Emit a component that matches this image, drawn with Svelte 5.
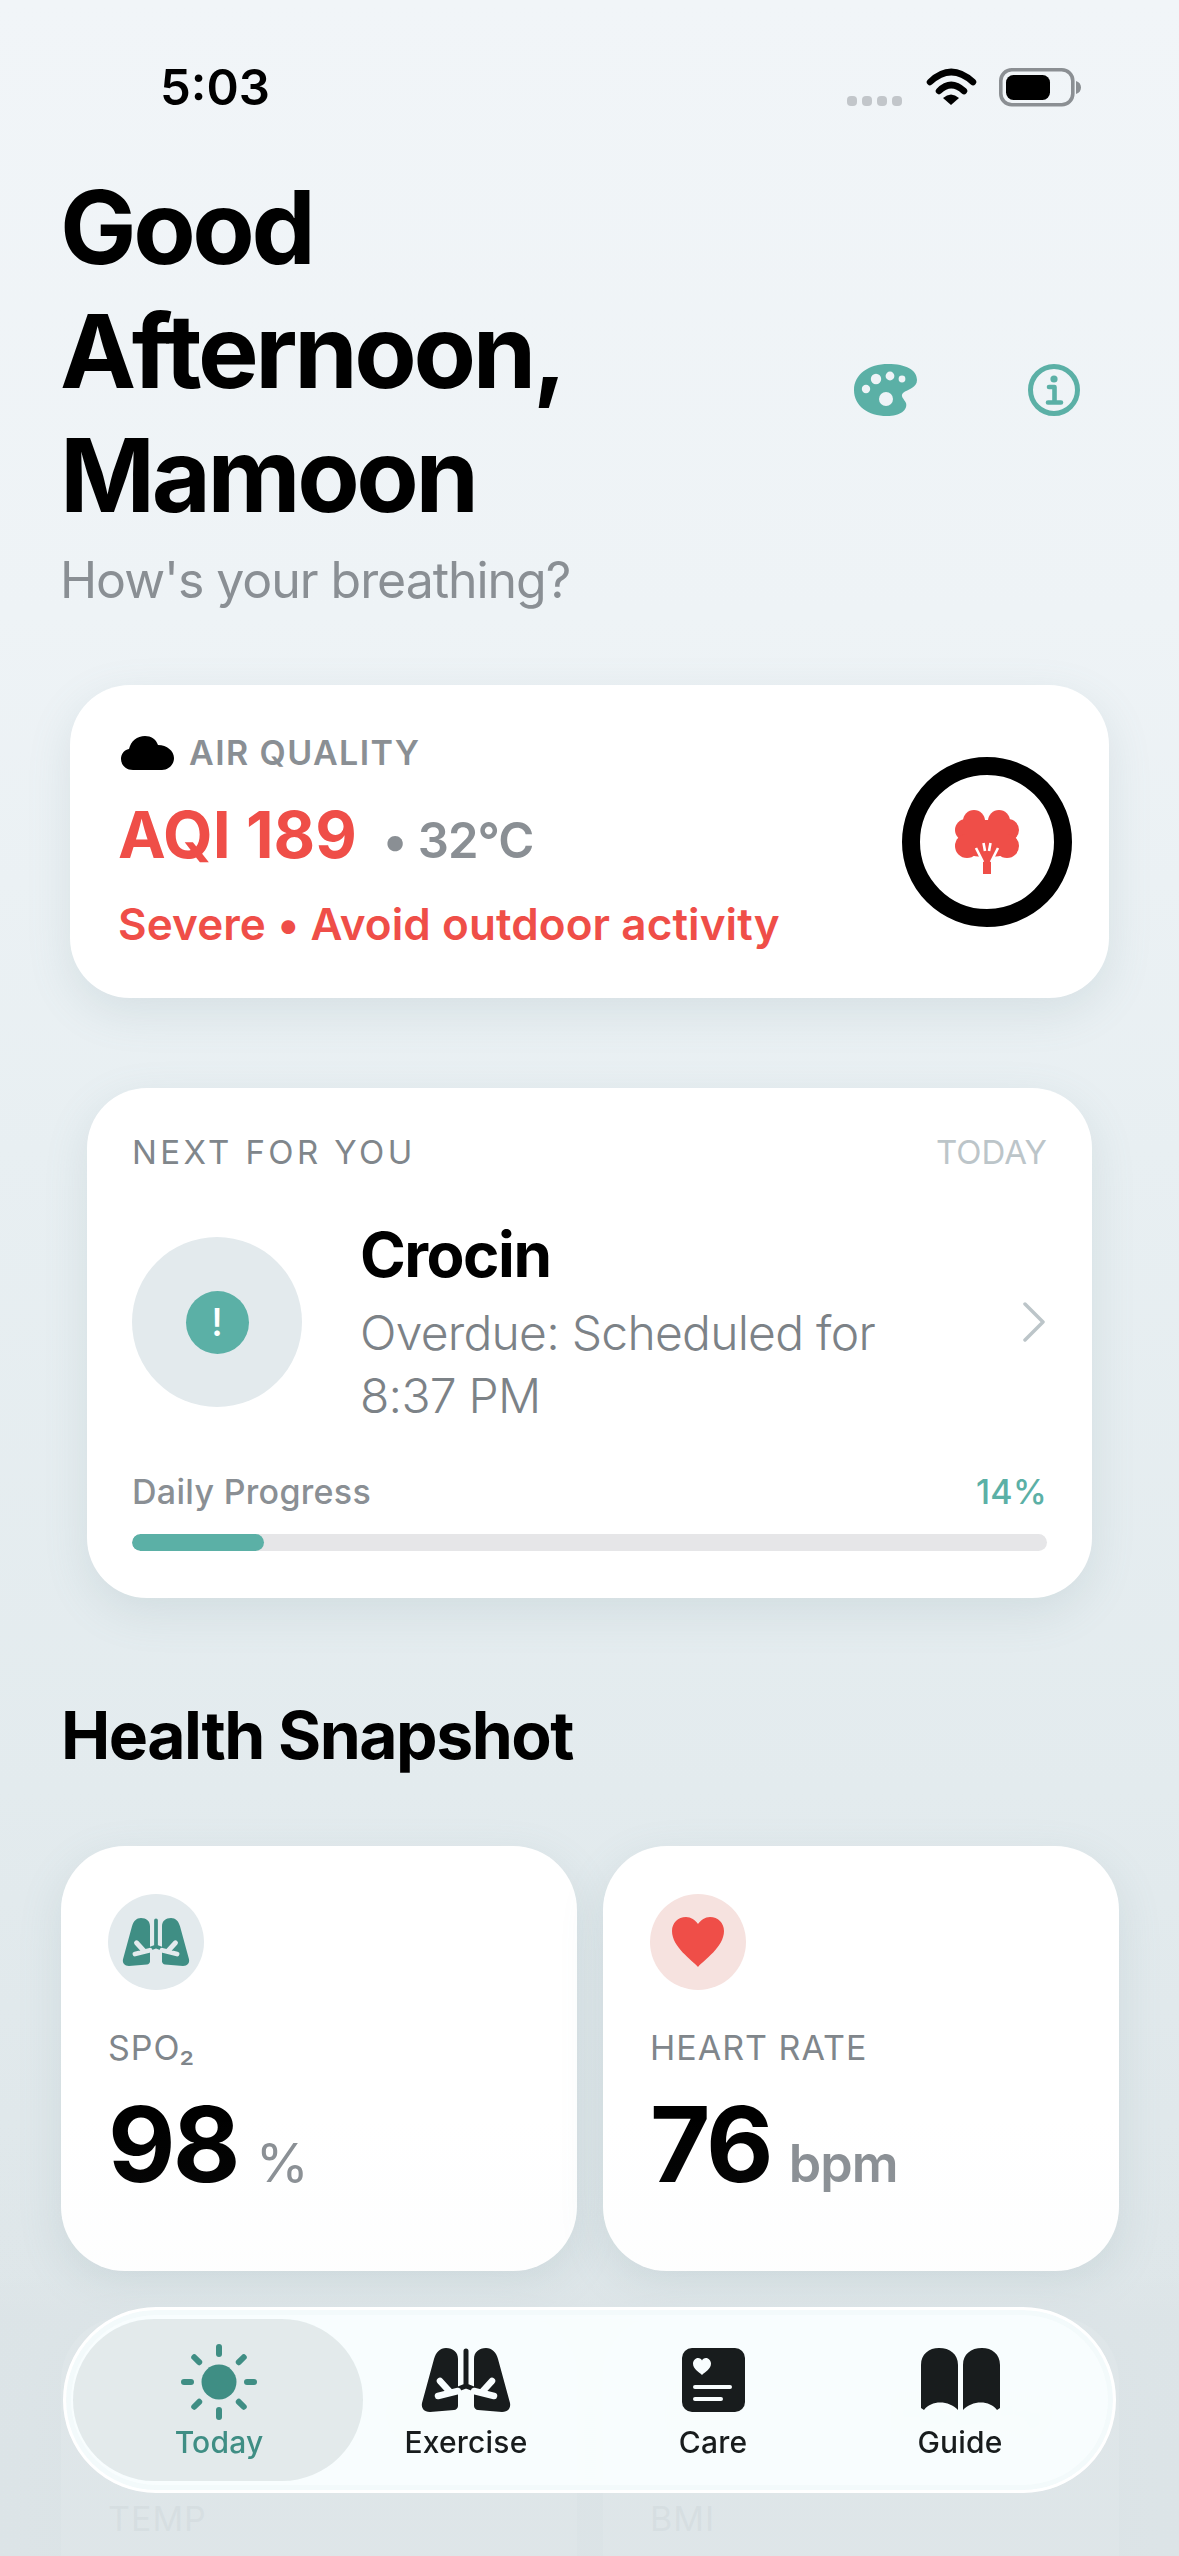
<script>
	const vitals = [
		{ label: "SPO₂", value: "98", unit: "%", tone: "teal", kind: "lungs" },
		{ label: "HEART RATE", value: "76", unit: "bpm", tone: "red", kind: "heart" },
	];
	const tabs = ["Today", "Exercise", "Care", "Guide"];
	const sunRays = [0, 45, 90, 135, 180, 225, 270, 315];
</script>

{#snippet lungs(fill, cut)}
	<svg class="lungs" viewBox="0 0 90 64" {fill}>
		<path d="M25 0C32 0 37 4 37 11V58C37 60 35 62 33 62L9 64C3 64 0 60 1 55L13 11C15 4 19 0 25 0Z" />
		<path d="M65 0C58 0 53 4 53 11V58C53 60 55 62 57 62L81 64C87 64 90 60 89 55L77 11C75 4 71 0 65 0Z" />
		<path d="M45 3V38M37 41L45 38L53 41" stroke={fill} stroke-width="5" stroke-linecap="round" fill="none" />
		<path d="M37 43L17 48M29 44L19 33M53 43L73 48M61 44L71 33" stroke={cut} stroke-width="6.5" stroke-linecap="round" fill="none" />
	</svg>
{/snippet}

<div class="screen">
	<div class="status">
		<span class="time">5:03</span>
		<div class="status-icons">
			<div class="dots"><i></i><i></i><i></i><i></i></div>
			<svg class="wifi" viewBox="0 0 51 37">
				<path d="M4 14Q25 -6 47 14M13 23Q25 11 38 23" fill="none" stroke="#000" stroke-width="6.5" stroke-linecap="round" />
				<path d="M17 30Q25 23 33 30L25 37Z" fill="#000" />
			</svg>
			<svg class="battery" viewBox="0 0 82 39">
				<rect x="1.8" y="1.8" width="72" height="35" rx="11" fill="none" stroke="#8b8f93" stroke-width="3.6" />
				<rect x="7" y="7" width="44" height="25" rx="7.5" fill="#000" />
				<path d="M77 13C80 14 82 16 82 19.5C82 23 80 25 77 26Z" fill="#8b8f93" />
			</svg>
		</div>
	</div>

	<header class="hero">
		<div>
			<h1>Good<br />Afternoon,<br />Mamoon</h1>
			<p class="sub">How's your breathing?</p>
		</div>
		<div class="hero-actions">
			<svg class="palette" viewBox="0 0 63 52">
				<path d="M34 0C52 0 63 6 63 16C63 24 54 25 49 29C46 32 50 35 52 39C54 46 46 52 33 52C14 52 0 42 0 26C0 10 15 0 34 0Z" fill="#5bb0a6" />
				<circle cx="22" cy="15" r="5.2" fill="#eff3f7" />
				<circle cx="36" cy="12" r="4.4" fill="#eff3f7" />
				<circle cx="48" cy="15" r="3.4" fill="#eff3f7" />
				<circle cx="12" cy="25" r="4.2" fill="#eff3f7" />
				<circle cx="32" cy="35" r="7" fill="#eff3f7" />
			</svg>
			<svg class="info" viewBox="0 0 52 52">
				<circle cx="26" cy="26" r="23.5" fill="none" stroke="#5bb0a6" stroke-width="5" />
				<circle cx="26" cy="15" r="3.6" fill="#5bb0a6" />
				<path d="M21 23H26.500V38M20 38.500H33" fill="none" stroke="#5bb0a6" stroke-width="4.600" stroke-linecap="round" stroke-linejoin="round" />
			</svg>
		</div>
	</header>

	<section class="card air">
		<div class="air-text">
			<div class="air-head">
				<svg class="cloud" viewBox="0 0 53 34">
					<path d="M12 34C5 34 0 29 0 23C0 18 3 14 8 13C10 5 16 0 24 0C30 0 35 3 37 9C46 9 53 15 53 22C53 29 47 34 41 34Z" fill="#000" />
				</svg>
				<span>AIR QUALITY</span>
			</div>
			<div class="air-reading">
				<strong>AQI 189</strong>
				<span>• 32°C</span>
			</div>
			<p class="air-note">Severe • Avoid outdoor activity</p>
		</div>
		<div class="ring">
			<svg class="tree" viewBox="0 0 64 64" fill="#ef4e48">
				<circle cx="19" cy="11" r="11" />
				<circle cx="44" cy="11" r="11" />
				<circle cx="11" cy="20" r="11" />
				<circle cx="53" cy="20" r="11" />
				<circle cx="12" cy="36" r="12" />
				<circle cx="52" cy="36" r="12" />
				<path d="M12 10H52V44C44 48 20 48 12 44Z" />
				<path d="M28 64V52L22 40H42L36 52V64Z" />
				<path d="M21 38L28 52M43 38L36 52M28.500 33L30 41M35.500 33L34 41" stroke="#fff" stroke-width="2.600" fill="none" />
			</svg>
		</div>
	</section>

	<section class="card next">
		<div class="next-head">
			<span class="eyebrow">NEXT FOR YOU</span>
			<span class="today">TODAY</span>
		</div>
		<div class="next-body">
			<div class="alert-wrap">
				<div class="alert">!</div>
			</div>
			<div class="next-text">
				<h2>Crocin</h2>
				<p>Overdue: Scheduled for 8:37 PM</p>
			</div>
			<svg class="chevron" viewBox="0 0 22 40">
				<path d="M2 2L20 20L2 38" fill="none" stroke="#bcc5c9" stroke-width="3.500" stroke-linecap="round" stroke-linejoin="round" />
			</svg>
		</div>
		<div class="progress-head">
			<span>Daily Progress</span>
			<span class="pct">14%</span>
		</div>
		<div class="track"><div class="fill" style="width: 14.4%"></div></div>
	</section>

	<h3 class="section-title">Health Snapshot</h3>

	<div class="grid">
		{#each vitals as v}
			<div class="card vital">
				<div class="badge {v.tone}">
					{#if v.kind === "lungs"}
						{@render lungs("#3f8e84", "#e3eaed")}
					{:else}
						<svg class="heart" viewBox="0 0 52 50">
							<path d="M26 50C20 43 0 30 0 14C0 6 6 0 14 0C19 0 23 3 26 7C29 3 33 0 38 0C46 0 52 6 52 14C52 30 32 43 26 50Z" fill="#ef4e48" />
						</svg>
					{/if}
				</div>
				<div class="vital-label">{v.label}</div>
				<div class="vital-value">
					<b>{v.value}</b>
					<span class={v.kind === "heart" ? "unit bold" : "unit"}>{v.unit}</span>
				</div>
			</div>
		{/each}
		<div class="card vital lower">
			<div class="lower-top">
				<div class="badge pink"></div>
				<span class="ghost-pill pink">High</span>
			</div>
			<div class="vital-label">TEMP</div>
		</div>
		<div class="card vital lower">
			<div class="lower-top">
				<div class="badge grey"></div>
				<span class="ghost-pill">Healthy</span>
			</div>
			<div class="vital-label">BMI</div>
		</div>
	</div>

	<div class="fade"></div>

	<nav class="tabbar">
		{#each tabs as tab, i}
			<div class={i === 0 ? "tab active" : "tab"}>
				{#if i === 0}
					<svg class="sun" viewBox="0 0 76 76">
						<circle cx="38" cy="38" r="17.500" fill="#3f8e84" />
						{#each sunRays as a}
							<path d="M38 3V10" transform="rotate({a} 38 38)" stroke="#3f8e84" stroke-width="6" stroke-linecap="round" />
						{/each}
					</svg>
				{:else if i === 1}
					{@render lungs("#181c1d", "#f8fdfe")}
				{:else if i === 2}
					<svg class="care" viewBox="0 0 63 64">
						<rect width="63" height="64" rx="10" fill="#181c1d" />
						<path d="M20 27C17 24 11 21 11 15.500C11 12.500 13.500 10 16 10C18 10 19.500 11 20 12.500C20.500 11 22 10 24 10C26.500 10 29 12.500 29 15.500C29 21 23 24 20 27Z" fill="#f8fdfe" />
						<path d="M13 39H48M13 51H39" stroke="#f8fdfe" stroke-width="4" stroke-linecap="round" />
					</svg>
				{:else}
					<svg class="book" viewBox="0 0 79 62" fill="#181c1d">
						<path d="M0 17C0 6 8 0 18 0C29 0 37 6 37 17V62C28 52 10 52 3 62L0 60Z" />
						<path d="M79 17C79 6 71 0 61 0C50 0 42 6 42 17V62C51 52 69 52 76 62L79 60Z" />
					</svg>
				{/if}
				<span>{tab}</span>
			</div>
		{/each}
	</nav>
</div>

<style>
	:global(body) {
		margin: 0;
	}

	.screen {
		position: relative;
		width: 1179px;
		height: 2556px;
		overflow: hidden;
		font-family: Inter, "Liberation Sans", sans-serif;
		color: #000;
		background: linear-gradient(180deg, #f1f5f8 0, #eef3f6 24%, #e8eff2 45%, #e3ebee 70%, #dce4e7 100%);
	}

	.status {
		display: flex;
		justify-content: space-between;
		padding: 60px 98px 0 160px;
		height: 105px;
		box-sizing: border-box;
	}

	.time {
		font-size: 49px;
		font-weight: 600;
		line-height: 56px;
	}

	.status-icons {
		display: flex;
		align-items: flex-start;
		padding-top: 8px;
	}

	.dots {
		display: flex;
		gap: 5px;
		margin: 28px 24px 0 0;
	}

	.dots i {
		width: 10px;
		height: 10px;
		border-radius: 4px;
		background: #c2c6ca;
	}

	.wifi {
		width: 51px;
		height: 37px;
		margin-right: 22px;
	}

	.battery {
		width: 82px;
		height: 39px;
	}

	.hero {
		display: flex;
		justify-content: space-between;
		align-items: center;
		padding: 60px 99px 0 60px;
	}

	h1 {
		margin: 0;
		font-size: 102px;
		font-weight: 700;
		line-height: 124px;
		letter-spacing: -3.4px;
	}

	.sub {
		margin: 13px 0 0;
		font-size: 50px;
		line-height: 60px;
		color: #8a8f94;
		letter-spacing: -1.05px;
	}

	.hero-actions {
		display: flex;
		align-items: center;
		gap: 111px;
		margin-top: 4px;
	}

	.palette {
		width: 63px;
		height: 52px;
	}

	.info {
		width: 52px;
		height: 52px;
	}

	.card {
		background: #fff;
		border-radius: 60px;
		box-shadow: 0 14px 44px rgba(110, 140, 150, 0.16);
	}

	.air {
		display: flex;
		justify-content: space-between;
		align-items: center;
		box-sizing: border-box;
		height: 313px;
		margin: 75px 70px 0;
		padding: 0 37px 0 48px;
	}

	.air-head {
		display: flex;
		align-items: center;
		gap: 15px;
		margin-left: 3px;
		font-size: 34px;
		font-weight: 600;
		line-height: 40px;
		letter-spacing: 1.4px;
		color: #8a8f94;
	}

	.cloud {
		width: 53px;
		height: 34px;
	}

	.air-reading {
		display: flex;
		align-items: baseline;
		gap: 26px;
		margin-top: 24px;
		line-height: 76px;
	}

	.air-reading strong {
		font-size: 64px;
		font-weight: 700;
		color: #ef4e48;
	}

	.air-reading span {
		font-size: 49px;
		font-weight: 600;
		color: #8a8f94;
		letter-spacing: -1px;
	}

	.air-note {
		margin: 18px 0 0;
		font-size: 44px;
		font-weight: 600;
		line-height: 54px;
		color: #ef4e48;
		letter-spacing: 0.1px;
	}

	.ring {
		display: flex;
		align-items: center;
		justify-content: center;
		box-sizing: border-box;
		width: 170px;
		height: 170px;
		border: 18px solid #000;
		border-radius: 50%;
	}

	.tree {
		width: 64px;
		height: 64px;
	}

	.next {
		box-sizing: border-box;
		height: 510px;
		margin: 90px 87px 0;
		padding: 44px 45px 0;
	}

	.next-head,
	.progress-head {
		display: flex;
		justify-content: space-between;
	}

	.eyebrow,
	.today {
		font-size: 33px;
		line-height: 40px;
		color: #80868b;
		letter-spacing: 3.4px;
	}

	.today {
		color: #bcc5c9;
		letter-spacing: 0;
	}

	.next-body {
		display: flex;
		align-items: center;
		margin-top: 47px;
		height: 206px;
	}

	.alert-wrap {
		display: flex;
		align-items: center;
		justify-content: center;
		flex: none;
		width: 170px;
		height: 170px;
		border-radius: 50%;
		background: #e3eaed;
	}

	.alert {
		width: 63px;
		height: 63px;
		border-radius: 50%;
		background: #5bb0a6;
		color: #fff;
		font-size: 38px;
		font-weight: 500;
		line-height: 63px;
		text-align: center;
	}

	.next-text {
		flex: 1;
		margin-left: 58px;
		margin-top: 2px;
	}

	h2 {
		margin: 0;
		font-size: 62px;
		font-weight: 700;
		line-height: 72px;
		letter-spacing: -1.5px;
	}

	.next-text p {
		margin: 10px 0 0;
		width: 540px;
		font-size: 48px;
		font-weight: 300;
		line-height: 63px;
		color: #7c8287;
		letter-spacing: -0.75px;
	}

	.chevron {
		flex: none;
		width: 22px;
		height: 40px;
		margin-right: 2px;
	}

	.progress-head {
		margin-top: 47px;
		font-size: 34px;
		font-weight: 500;
		line-height: 40px;
		color: #8a8f94;
		letter-spacing: 0.3px;
	}

	.pct {
		color: #5bb0a6;
	}

	.track {
		margin-top: 22px;
		height: 17px;
		border-radius: 9px;
		background: #e6e6e8;
		overflow: hidden;
	}

	.fill {
		height: 100%;
		border-radius: 9px;
		background: #5bb0a6;
	}

	.section-title {
		margin: 101px 0 0 61px;
		font-size: 66px;
		font-weight: 700;
		line-height: 72px;
		letter-spacing: -1.5px;
	}

	.grid {
		display: grid;
		grid-template-columns: 516px 516px;
		column-gap: 26px;
		row-gap: 46px;
		margin: 75px 60px 0 61px;
	}

	.vital {
		box-sizing: border-box;
		height: 425px;
		padding: 48px 47px 0;
		border-radius: 64px;
	}

	.badge {
		display: flex;
		align-items: center;
		justify-content: center;
		width: 96px;
		height: 96px;
		border-radius: 50%;
		background: #e3eaed;
	}

	.badge.red,
	.badge.pink {
		background: #f6e2df;
	}

	.lungs {
		width: 90px;
		height: 64px;
	}

	.badge .lungs {
		width: 68px;
		height: 48px;
	}

	.heart {
		width: 52px;
		height: 50px;
	}

	.vital-label {
		margin-top: 37px;
		font-size: 34px;
		line-height: 42px;
		color: #80868b;
		letter-spacing: 1px;
	}

	.vital-value {
		display: flex;
		align-items: baseline;
		gap: 18px;
		margin-top: 20px;
		line-height: 110px;
	}

	.vital-value b {
		font-size: 104px;
		font-weight: 700;
		letter-spacing: -2.8px;
	}

	.unit {
		font-size: 54px;
		font-weight: 400;
		color: #8a8f94;
	}

	.unit.bold {
		font-size: 52px;
		font-weight: 600;
		letter-spacing: -1px;
	}

	.lower-top {
		display: flex;
		justify-content: space-between;
		align-items: center;
	}

	.ghost-pill {
		padding: 6px 26px;
		border-radius: 30px;
		background: #e9eef0;
		font-size: 40px;
		font-weight: 600;
		color: #b9c2c6;
	}

	.ghost-pill.pink {
		background: #f8d6d0;
		color: #e49c94;
	}

	.fade {
		position: absolute;
		left: 0;
		right: 0;
		bottom: 0;
		height: 440px;
		background: linear-gradient(
			180deg,
			rgba(220, 228, 231, 0) 0,
			rgba(220, 228, 231, 0.05) 36%,
			rgba(220, 228, 231, 0.92) 46%,
			rgba(220, 228, 231, 0.94) 100%
		);
	}

	.tabbar {
		position: absolute;
		left: 63px;
		top: 2307px;
		display: grid;
		grid-template-columns: repeat(4, 247px);
		justify-content: center;
		box-sizing: border-box;
		width: 1053px;
		height: 186px;
		border: 3px solid #fff;
		border-radius: 93px;
		background: rgba(250, 255, 255, 0.92);
		backdrop-filter: blur(6px);
		box-shadow: inset 0 0 0 5px rgba(240, 246, 248, 0.6);
	}

	.tab {
		position: relative;
		display: flex;
		flex-direction: column;
		align-items: center;
		justify-content: flex-end;
		height: 150px;
		font-size: 30px;
		font-weight: 500;
		line-height: 36px;
		color: #181c1d;
		letter-spacing: 0.2px;
	}

	.tab span {
		position: relative;
		margin-top: 12px;
	}

	.tab svg {
		position: relative;
		flex: none;
	}

	.tab.active {
		color: #3f8e84;
	}

	.tab.active::before {
		content: "";
		position: absolute;
		left: -23px;
		right: -20px;
		top: 9px;
		height: 162px;
		border-radius: 81px;
		background: rgba(222, 230, 232, 0.85);
	}

	.sun {
		width: 76px;
		height: 76px;
		margin-bottom: -8px;
	}

	.care {
		width: 63px;
		height: 64px;
	}

	.book {
		width: 79px;
		height: 62px;
		margin-bottom: 2px;
	}
</style>
